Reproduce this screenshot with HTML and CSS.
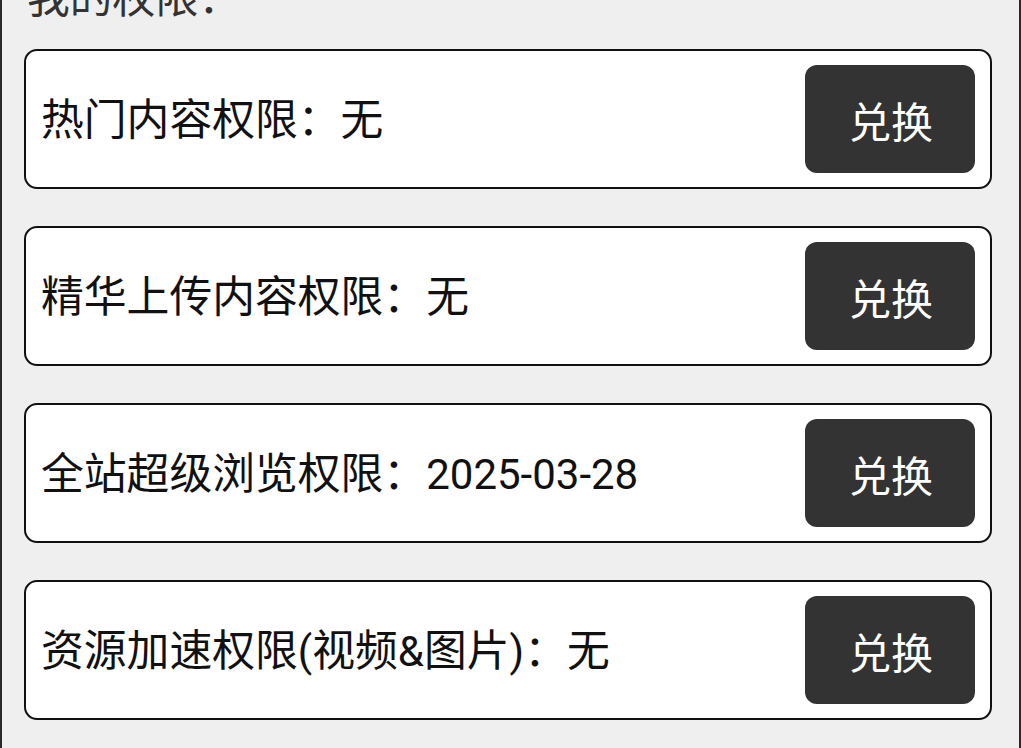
FILE: index.html
```html
<!DOCTYPE html>
<html lang="zh-CN">
<head>
<meta charset="utf-8">
<title>我的权限</title>
<link rel="stylesheet" href="styles.css">
</head>
<body>
<div class="frame">
  <div class="title">我的权限：</div>
  <div class="list">
    <div class="card">
      <span class="label">热门内容权限：无</span>
      <button class="btn">兑换</button>
    </div>
    <div class="card">
      <span class="label">精华上传内容权限：无</span>
      <button class="btn">兑换</button>
    </div>
    <div class="card">
      <span class="label">全站超级浏览权限：<span class="latin">2025-03-28</span></span>
      <button class="btn">兑换</button>
    </div>
    <div class="card">
      <span class="label">资源加速权限<span class="latin">(</span>视频<span class="latin">&amp;</span>图片<span class="latin">)</span>：无</span>
      <button class="btn">兑换</button>
    </div>
  </div>
</div>
</body>
</html>
```
FILE: styles.css
```css
html, body {
  margin: 0;
  padding: 0;
  background: #efefef;
}
body {
  font-family: Roboto, "Noto Sans CJK SC", sans-serif;
  overflow: hidden;
}
.frame {
  box-sizing: border-box;
  width: 1021px;
  height: 748px;
  border-left: 2px solid #2a2a2a;
  border-right: 2px solid #2a2a2a;
  overflow: hidden;
}
.title {
  font-size: 42.8px;
  line-height: 50px;
  color: #333;
  margin-top: -27px;
  padding-left: 25px;
  height: 50px;
}
.list {
  display: flex;
  flex-direction: column;
  gap: 37px;
  margin-top: 26px;
  padding-left: 22px;
}
.card {
  box-sizing: border-box;
  width: 968px;
  height: 140px;
  background: #fff;
  border: 2px solid #111;
  border-radius: 13px;
  display: flex;
  align-items: center;
  justify-content: space-between;
  padding: 0 15px 0 15px;
}
.label {
  font-size: 42.8px;
  color: #111;
  line-height: 50px;
  white-space: nowrap;
  padding-top: 2px;
}
.latin {
  font-size: 42px;
}
.btn {
  width: 170px;
  height: 108px;
  border: none;
  border-radius: 12px;
  background: #333;
  color: #fff;
  font-family: Roboto, "Noto Sans CJK SC", sans-serif;
  font-size: 42px;
  padding: 0 0 0 2px;
}
```
